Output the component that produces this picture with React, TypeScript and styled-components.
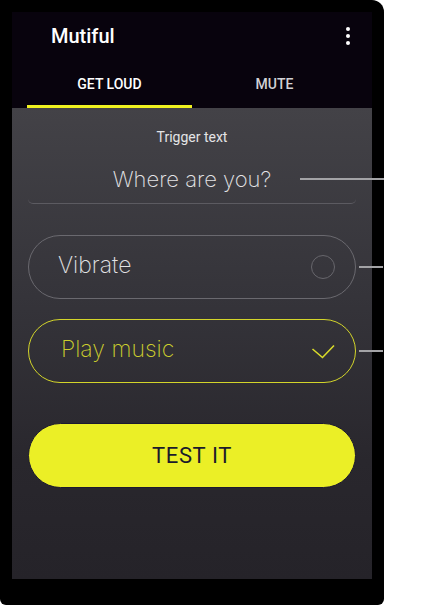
import { FC } from 'react'
import styled, { createGlobalStyle } from 'styled-components'

const GlobalStyle = createGlobalStyle`
	html, body {
		margin: 0;
		padding: 0;
		background: #ffffff;
	}
	body {
		font-family: Roboto, 'Liberation Sans', sans-serif;
	}
	* {
		box-sizing: border-box;
	}
`

// Roboto has no light cut here, so the thin field text uses Inter
const thinFont = `Inter, Roboto, sans-serif`

const Phone = styled.div`
	width: 384px;
	height: 605px;
	padding: 12px 12px 26px 12px;
	background-color: #000000;
	border-radius: 0 12px 6px 6px;
`

const Screen = styled.div`
	display: flex;
	flex-direction: column;
	height: 100%;
`

const AppBar = styled.header`
	display: flex;
	align-items: center;
	justify-content: space-between;
	height: 48px;
	padding: 0 22px 0 39px;
	background-color: #08030d;
`

const Title = styled.h1`
	margin: 0;
	font-size: 20px;
	font-weight: 500;
	color: #ffffff;
`

const MenuButton = styled.div`
	display: flex;
	flex-direction: column;
	gap: 3px;
	cursor: pointer;
`

const Dot = styled.span`
	width: 4px;
	height: 4px;
	border-radius: 50%;
	background-color: #ffffff;
`

const TabBar = styled.nav`
	display: grid;
	grid-template-columns: 1fr 1fr;
	height: 48px;
	padding: 0 15px;
	background-color: #08030d;
`

const Tab = styled.div<{ active?: boolean }>`
	display: flex;
	align-items: center;
	justify-content: center;
	padding-top: 3px;
	font-size: 14px;
	font-weight: 500;
	color: ${({ active }) => (active ? '#ffffff' : '#d2d2d6')};
	border-bottom: 3px solid ${({ active }) => (active ? '#f0f21f' : 'transparent')};
`

const Content = styled.main`
	flex: 1;
	display: flex;
	flex-direction: column;
	padding: 19px 16px 0 16px;
	background: linear-gradient(180deg, #434247 0%, #35343a 40%, #29272d 75%, #252329 100%);
`

const Label = styled.div`
	font-size: 14px;
	line-height: 20px;
	text-align: center;
	color: #e4e4e6;
`

const TriggerField = styled.div`
	position: relative;
	margin-top: 16px;
	padding-bottom: 8px;
	border-bottom: 1.5px solid #5c5b61;
	border-radius: 0 0 5px 5px;
	text-align: center;
	font-family: ${thinFont};
	font-size: 22px;
	font-weight: 200;
	line-height: 32px;
	color: #e4e4e6;
`

const Connector = styled.span<{ from: number }>`
	position: absolute;
	right: -28px;
	top: 50%;
	width: ${({ from }) => 384 - from}px;
	height: 1.5px;
	margin-top: -1px;
	background-color: #a3a3a6;
`

const TriggerConnector = styled(Connector)`
	top: 16px;
`

const Option = styled.div<{ checked?: boolean; indent: number }>`
	position: relative;
	display: flex;
	align-items: center;
	justify-content: space-between;
	height: 64px;
	padding: 0 20px 4px ${({ indent }) => indent}px;
	border: ${({ checked }) => (checked ? '1.5px solid #d3d52a' : '1px solid #6a696f')};
	border-radius: 32px;
	font-family: ${thinFont};
	font-size: 23px;
	font-weight: ${({ checked }) => (checked ? 250 : 200)};
	color: ${({ checked }) => (checked ? '#cbcd2d' : '#e2e2e4')};
`

const OptionGap = styled.div<{ size: number }>`
	height: ${({ size }) => size}px;
	flex-shrink: 0;
`

const RadioCircle = styled.span`
	width: 24px;
	height: 24px;
	margin-top: 4px;
	border: 1.5px solid #67666c;
	border-radius: 50%;
`

const CheckIcon = styled.svg`
	width: 24px;
	height: 16px;
	margin-top: 5px;
`

const TestButton = styled.button`
	height: 65px;
	border: 1px solid #1c1a2e;
	border-radius: 33px;
	background-color: #ebef26;
	color: #1b1a2b;
	font-family: Roboto, 'Liberation Sans', sans-serif;
	font-size: 22px;
	font-weight: 400;
	letter-spacing: 0.6px;
	cursor: pointer;
`

const App: FC = () => {
	return (
		<>
			<GlobalStyle />
			<Phone>
				<Screen>
					<AppBar>
						<Title>Mutiful</Title>
						<MenuButton>
							<Dot />
							<Dot />
							<Dot />
						</MenuButton>
					</AppBar>

					<TabBar>
						<Tab active>GET LOUD</Tab>
						<Tab>MUTE</Tab>
					</TabBar>

					<Content>
						<Label>Trigger text</Label>
						<TriggerField>
							Where are you?
							<TriggerConnector from={300} />
						</TriggerField>

						<OptionGap size={31} />
						<Option indent={29}>
							Vibrate
							<RadioCircle />
							<Connector from={360} />
						</Option>

						<OptionGap size={20} />
						<Option checked indent={32}>
							Play music
							<CheckIcon viewBox="0 0 24 16">
								<polyline
									points="1.5,5 11.5,13.5 23,1.5"
									fill="none"
									stroke="#d9db2a"
									strokeWidth="1.6"
								/>
							</CheckIcon>
							<Connector from={360} />
						</Option>

						<OptionGap size={40} />
						<TestButton>TEST IT</TestButton>
					</Content>
				</Screen>
			</Phone>
		</>
	)
}

export default App
